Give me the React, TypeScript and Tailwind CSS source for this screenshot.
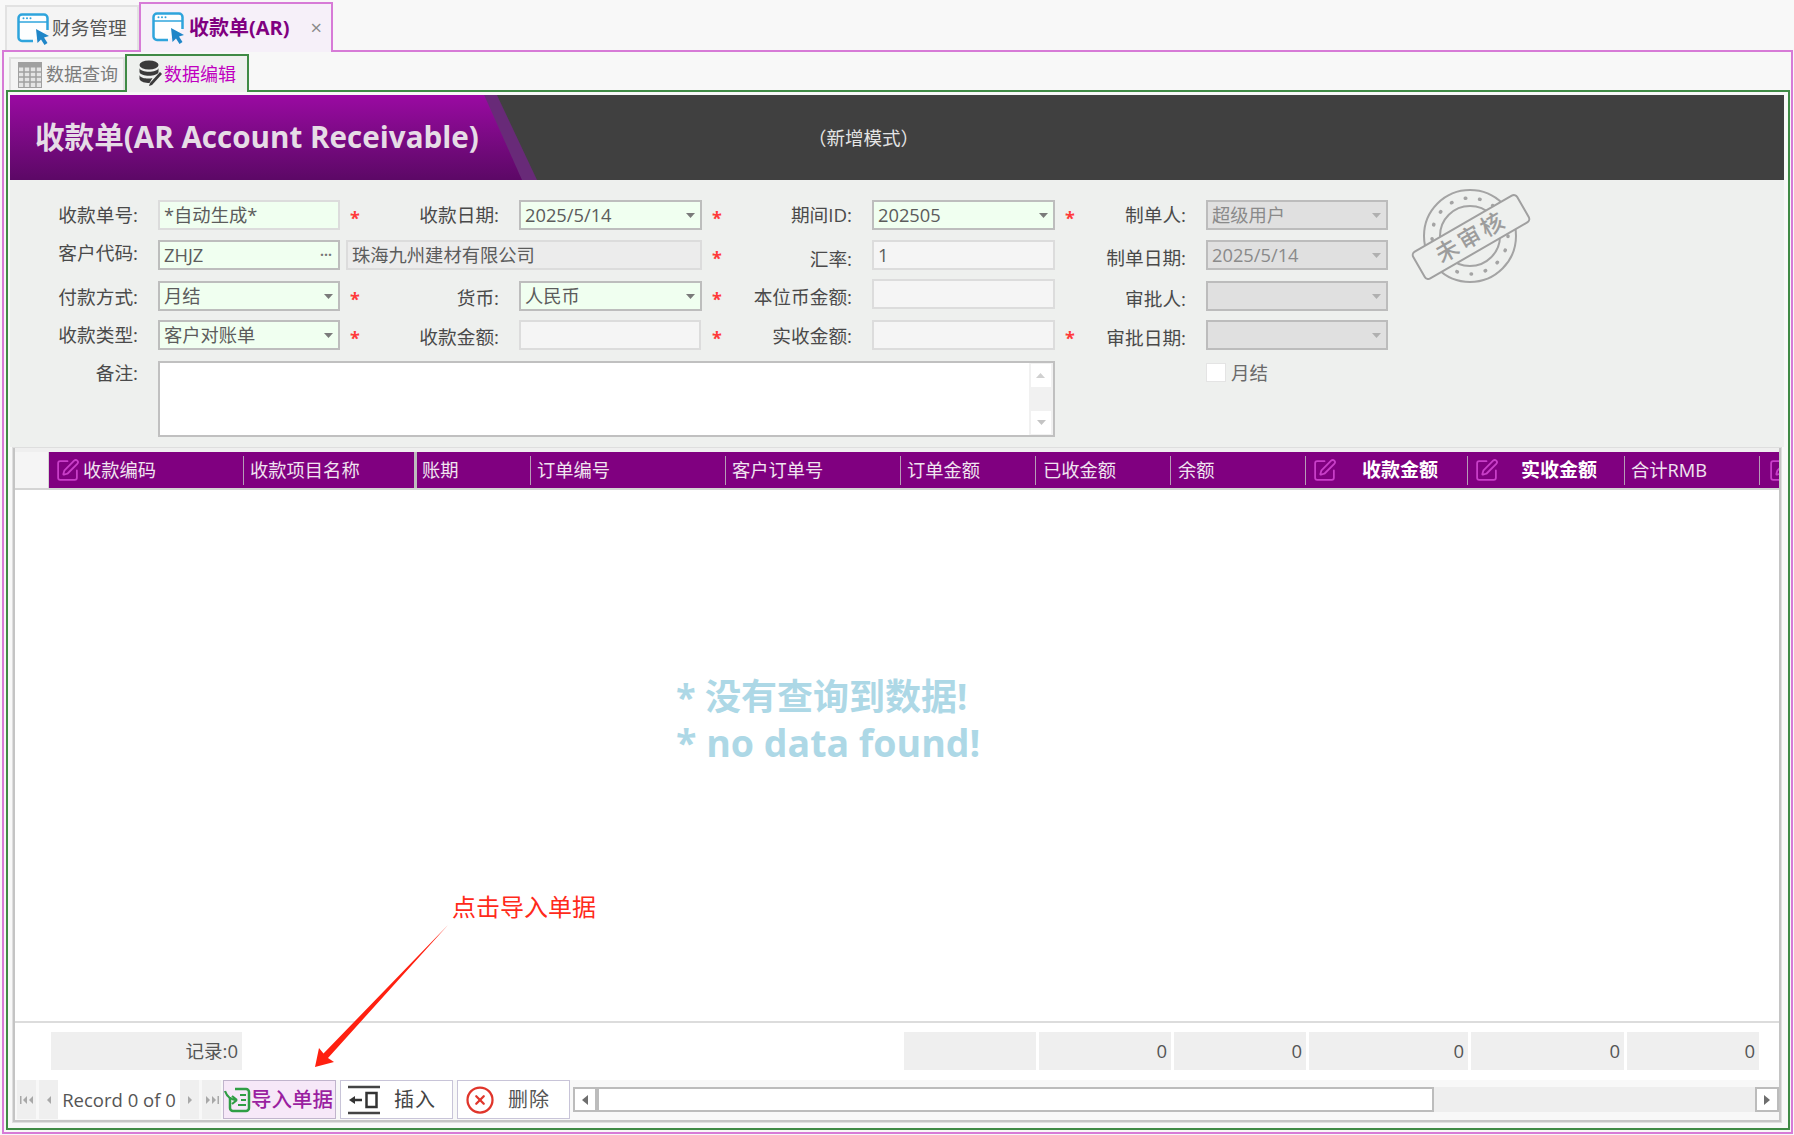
import React from 'react';
import { SquarePen, CircleX } from 'lucide-react';

const fieldText = "pt-[1px] text-[18.300px] leading-none text-[#5c5c5c]";

// blue window with a cursor, used on both top tabs
const WindowIcon = () => (
  <svg width="34" height="34" viewBox="0 0 34 34" className="shrink-0">
    <path d="M17 29H6a3.500 3.500 0 0 1-3.500-3.500V6A3.500 3.500 0 0 1 6 2.500h22A3.500 3.500 0 0 1 31.500 6v12" fill="#fdfeff" stroke="#2ea4dc" strokeWidth="2.500" />
    <path d="M3 10h28" stroke="#2ea4dc" strokeWidth="1.500" />
    <circle cx="7.500" cy="6.300" r="1" fill="#2ea4dc" />
    <circle cx="11" cy="6.300" r="1" fill="#2ea4dc" />
    <circle cx="14.500" cy="6.300" r="1" fill="#2ea4dc" />
    <path d="M20 17l13 7-5 1.500 3.500 5.500-3 2-3.500-5.500-3.500 3.500z" fill="#1f86c8" />
  </svg>
);

const GridIcon = () => (
  <svg width="24" height="26" viewBox="0 0 24 26" className="shrink-0">
    <rect x="0.500" y="0.500" width="23" height="25" fill="#e4e4e4" stroke="#a0a0a0" />
    <rect x="0.500" y="0.500" width="23" height="5" fill="#a0a0a0" />
    <path d="M6 5v20M12 5v20M18 5v20M1 10h22M1 15h22M1 20h22" stroke="#a0a0a0" strokeWidth="1.500" />
  </svg>
);

const DbEditIcon = () => (
  <svg width="24" height="28" viewBox="0 0 24 28" className="shrink-0">
    <ellipse cx="11" cy="5" rx="9.500" ry="4.500" fill="#3b3b3b" />
    <path d="M1.500 8c1 5 18 5 19 0v4c-1 5-18 5-19 0z" fill="#3b3b3b" />
    <path d="M1.500 15c1 4 10 4 13 3l-3 5c-4 0-9-1-10-4z" fill="#3b3b3b" />
    <path d="M22 12l2 2-10 11-3 1 1-3z" fill="#3b3b3b" />
  </svg>
);

const Caret = ({ color = '#7a7a7a' }: { color?: string }) => (
  <svg width="9" height="5" viewBox="0 0 9 5" className="shrink-0">
    <path d="M0 0h9L4.500 5z" fill={color} />
  </svg>
);

const Star = () => <div className="pl-[10px] pt-[6px] text-[18px] font-bold leading-[24px] text-[#ff3a3a]">*</div>;

const Label = ({ text, w, className = '' }: { text: string; w: string; className?: string }) => (
  <div className={`${w} pr-[20px] text-right text-[18.700px] leading-[30px] text-[#4a4a4a] whitespace-nowrap ${className}`}>{text}</div>
);

const Field = ({ value, w, kind, caret, className = '' }: { value?: string; w: string; kind: 'req' | 'reqSoft' | 'read' | 'off'; caret?: boolean; className?: string }) => {
  const look = {
    req: 'bg-[#f0fff0] border-[#bdbdbd]',
    reqSoft: 'bg-[#f0fff0] border-[#dcdcdc]',
    read: 'bg-[#f5f5f5] border-[#dcdcdc]',
    off: 'bg-[#e0e0e0] border-[#bcbcbc]',
  }[kind];
  return (
    <div className={`${w} h-[30px] border-2 ${look} flex items-center justify-between pl-[4px] pr-[5px] ${className}`}>
      <span className={kind === 'off' ? 'pt-[1px] text-[18.300px] leading-none text-[#8a8a8a]' : fieldText}>{value}</span>
      {caret && <Caret color={kind === 'off' ? '#b0b0b0' : '#7a7a7a'} />}
    </div>
  );
};

const Stamp = () => (
  <svg width="122" height="96" viewBox="0 0 122 96" className="ml-[22px] mt-[-11px] shrink-0">
    <g fill="none" stroke="#a4a4a4">
      <circle cx="60" cy="47" r="46" strokeWidth="2" />
      <circle cx="60" cy="47" r="30" strokeWidth="2" />
      <circle cx="60" cy="47" r="38" strokeWidth="3.500" strokeDasharray="0.500 14" strokeLinecap="round" />
    </g>
    <g transform="rotate(-30 61 48)">
      <rect x="1" y="32.500" width="120" height="31" rx="4" fill="#eef0ee" stroke="#a0a0a0" strokeWidth="2" />
      <text x="61" y="56" textAnchor="middle" fontSize="23" fontWeight="500" fill="#9c9c9c" letterSpacing="3">未审核</text>
    </g>
  </svg>
);

const HeadCell = ({ w, text, pl, icon, bold, thick }: { w: string; text: string; pl: string; icon?: boolean; bold?: boolean; thick?: boolean }) => (
  <div className={`${w} ${thick ? 'self-stretch border-r-[3px] border-[#bdbdbd]' : 'h-[29px] border-r border-[#b79bb7]'} shrink-0 flex items-center overflow-hidden leading-none ${bold ? 'text-[19px] font-bold text-white' : 'text-[18.300px] text-[#f0e4f0]'}`}>
    {icon && <SquarePen size={25} strokeWidth={1.700} className="ml-[6px] shrink-0 text-[#c83fc8]" />}
    <span className={`${pl} whitespace-nowrap`}>{text}</span>
  </div>
);

const SumCell = ({ w, text }: { w: string; text?: string }) => (
  <div className={`${w} h-[38px] bg-[#efefef] flex items-center justify-end pr-[4px] text-[18.500px] text-[#555]`}>{text}</div>
);

const NavBtn = ({ d, w = 'w-[19px]', className = '' }: { d: string; w?: string; className?: string }) => (
  <div className={`${w} h-[39px] bg-[#efefef] flex items-center justify-center ${className}`}>
    <svg width="14" height="10" viewBox="0 0 14 10">
      <path d={d} fill="#a8a8a8" />
    </svg>
  </div>
);

const ScrollBtn = ({ d, className = '' }: { d: string; className?: string }) => (
  <div className={`w-[24px] h-[25px] bg-white border-2 border-[#bcbcbc] flex items-center justify-center shrink-0 ${className}`}>
    <svg width="8" height="12" viewBox="0 0 8 12">
      <path d={d} fill="#6e6e6e" />
    </svg>
  </div>
);

export default function App() {
  return (
    <div className="relative w-[1794px] h-[1135px] overflow-hidden bg-[#f8f8f8] font-['Open_Sans','Noto_Sans_CJK_SC',sans-serif]">
      {/* top tabs */}
      <div className="h-[50px] flex items-end pl-[5px]">
        <div className="w-[134px] h-[45px] border-2 border-b-0 border-[#e2e2e2] bg-[#f4f4f4] flex items-center pl-[9px] gap-[2px]">
          <WindowIcon />
          <span className="text-[18.700px] text-[#555] whitespace-nowrap">财务管理</span>
        </div>
        <div className="relative z-10 w-[194px] h-[50px] mb-[-2px] border-2 border-b-0 border-[#d77bd7] bg-[#f6f0f9] flex items-center pl-[10px]">
          <WindowIcon />
          <span className="ml-[4px] text-[20px] font-bold text-[#800080] whitespace-nowrap">收款单(AR)</span>
          <span className="ml-[21px] text-[20px] leading-none text-[#8a8a8a]">×</span>
        </div>
      </div>

      <div className="ml-[2px] w-[1791px] h-[1084px] border-2 border-[#d77bd7] bg-[#f8f8f8]">
        {/* inner tabs */}
        <div className="h-[38px] flex items-end pl-[5px]">
          <div className="w-[116px] h-[33px] border-2 border-b-0 border-[#e0e0e0] bg-[#f4f4f4] flex items-center pl-[7px] gap-[4px]">
            <GridIcon />
            <span className="text-[18px] text-[#7c7c7c] whitespace-nowrap">数据查询</span>
          </div>
          <div className="relative z-10 w-[124px] h-[38px] mb-[-2px] border-2 border-b-0 border-[#3f8a45] bg-[#eef0ee] flex items-center pl-[11px] gap-[2px]">
            <DbEditIcon />
            <span className="text-[18px] text-[#c000c0] whitespace-nowrap">数据编辑</span>
          </div>
        </div>

        <div className="ml-[2px] w-[1784px] h-[1040px] border-2 border-[#3f8a45] bg-[#f8f8f8] pt-[3px] pl-[2px]">
          {/* banner */}
          <div className="relative w-[1774px] h-[85px] bg-[#404040] overflow-hidden flex items-center">
            <div className="absolute inset-y-0 left-0 w-[527px] bg-[#682a78] [clip-path:polygon(0_0,92.400%_0,100%_100%,0_100%)]" />
            <div className="absolute inset-y-0 left-0 w-[512px] bg-gradient-to-b from-[#9a0aa2] to-[#5c0866] [clip-path:polygon(0_0,92.600%_0,100%_100%,0_100%)]" />
            <span className="relative ml-[25px] text-[29.600px] font-bold text-[#e6dce6] whitespace-nowrap">收款单(AR Account Receivable)</span>
            <span className="absolute left-[798px] text-[18.500px] text-[#e4e4e4] whitespace-nowrap">（新增模式）</span>
          </div>

          {/* form */}
          <div className="w-[1774px] h-[267px] bg-[#eef0ee] pt-[20px] flex">
            <div>
              <div className="flex h-[30px]">
                <Label text="收款单号:" w="w-[148px]" />
                <Field value="*自动生成*" w="w-[182px]" kind="reqSoft" />
                <div className="w-[30px]"><Star /></div>
                <Label text="收款日期:" w="w-[149px]" />
                <Field value="2025/5/14" w="w-[183px]" kind="req" caret />
                <div className="w-[30px]"><Star /></div>
                <Label text="期间ID:" w="w-[140px]" />
                <Field value="202505" w="w-[183px]" kind="req" caret />
                <div className="w-[30px]"><Star /></div>
                <Label text="制单人:" w="w-[121px]" />
                <Field value="超级用户" w="w-[182px]" kind="off" caret />
              </div>
              <div className="flex h-[30px] mt-[10px]">
                <Label text="客户代码:" w="w-[148px]" className="mt-[-2px]" />
                <div className="w-[182px] h-[30px] border-2 border-[#bdbdbd] bg-[#f0fff0] flex items-center justify-between pl-[4px] pr-[6px]">
                  <span className={fieldText}>ZHJZ</span>
                  <span className="text-[14px] font-bold leading-none text-[#777] pb-[8px]">...</span>
                </div>
                <div className="ml-[6px] w-[356px] h-[30px] border-2 border-[#dcdcdc] bg-[#ececec] flex items-center pl-[4px]">
                  <span className={fieldText}>珠海九州建材有限公司</span>
                </div>
                <div className="w-[30px]"><Star /></div>
                <Label text="汇率:" w="w-[140px]" className="mt-[4px]" />
                <Field value="1" w="w-[183px]" kind="read" />
                <div className="w-[30px]" />
                <Label text="制单日期:" w="w-[121px]" className="mt-[3px]" />
                <Field value="2025/5/14" w="w-[182px]" kind="off" caret />
              </div>
              <div className="flex h-[30px] mt-[11px]">
                <Label text="付款方式:" w="w-[148px]" className="mt-[1px]" />
                <Field value="月结" w="w-[182px]" kind="req" caret />
                <div className="w-[30px]"><Star /></div>
                <Label text="货币:" w="w-[149px]" className="mt-[2px]" />
                <Field value="人民币" w="w-[183px]" kind="req" caret />
                <div className="w-[30px]"><Star /></div>
                <Label text="本位币金额:" w="w-[140px]" className="mt-[1px]" />
                <Field w="w-[183px]" kind="read" className="mt-[-2px]" />
                <div className="w-[30px]" />
                <Label text="审批人:" w="w-[121px]" className="mt-[3px]" />
                <Field w="w-[182px]" kind="off" caret />
              </div>
              <div className="flex h-[30px] mt-[9px]">
                <Label text="收款类型:" w="w-[148px]" />
                <Field value="客户对账单" w="w-[182px]" kind="req" caret />
                <div className="w-[30px]"><Star /></div>
                <Label text="收款金额:" w="w-[149px]" className="mt-[2px]" />
                <Field w="w-[182px]" kind="read" className="mr-[1px]" />
                <div className="w-[30px]"><Star /></div>
                <Label text="实收金额:" w="w-[140px]" className="mt-[1px]" />
                <Field w="w-[183px]" kind="read" />
                <div className="w-[30px]"><Star /></div>
                <Label text="审批日期:" w="w-[121px]" className="mt-[3px]" />
                <Field w="w-[182px]" kind="off" caret />
              </div>
              <div className="flex mt-[11px]">
                <Label text="备注:" w="w-[148px]" className="mt-[-3px]" />
                <div className="w-[897px] h-[76px] border-2 border-[#c0c0c0] bg-white flex justify-end">
                  <div className="w-[24px] px-[2px] py-[1px] bg-[#f1f1f1] flex flex-col justify-between">
                    <div className="h-[23px] bg-white flex items-center justify-center rotate-180"><Caret color="#d0d0d0" /></div>
                    <div className="h-[23px] bg-white flex items-center justify-center"><Caret color="#c4c4c4" /></div>
                  </div>
                </div>
                <div className="ml-[151px] mt-[2px] w-[20px] h-[19px] bg-white border border-[#e4e4e4]" />
                <span className="ml-[5px] text-[18.500px] leading-[24px] text-[#6a6a6a]">月结</span>
              </div>
            </div>
            <Stamp />
          </div>

          {/* grid */}
          <div className="ml-[2px] w-[1770px] h-[676px] border border-[#dedede] bg-white">
            <div className="h-full border-x-2 border-b-2 border-[#c4c4c4] flex flex-col">
              <div className="h-[4px] bg-[#efefef] shrink-0" />
              <div className="h-[38px] shrink-0 flex items-center border-b-2 border-[#d4d4d4]">
                <div className="w-[34px] self-stretch bg-[#f5f5f5] border-r border-[#d4d4d4] shrink-0" />
                <div className="flex-1 h-full bg-[#800080] flex items-center overflow-hidden">
                  <HeadCell w="w-[195px]" text="收款编码" pl="pl-[3px]" icon />
                  <HeadCell w="w-[173px]" text="收款项目名称" pl="pl-[6px]" thick />
                  <HeadCell w="w-[114px]" text="账期" pl="pl-[5px]" />
                  <HeadCell w="w-[195px]" text="订单编号" pl="pl-[6px]" />
                  <HeadCell w="w-[175px]" text="客户订单号" pl="pl-[6px]" />
                  <HeadCell w="w-[135px]" text="订单金额" pl="pl-[6px]" />
                  <HeadCell w="w-[135px]" text="已收金额" pl="pl-[7px]" />
                  <HeadCell w="w-[135px]" text="余额" pl="pl-[7px]" />
                  <HeadCell w="w-[162px]" text="收款金额" pl="pl-[25px]" icon bold />
                  <HeadCell w="w-[157px]" text="实收金额" pl="pl-[22px]" icon bold />
                  <HeadCell w="w-[135px]" text="合计RMB" pl="pl-[6px]" />
                  <SquarePen size={25} strokeWidth={1.700} className="ml-[8px] shrink-0 text-[#c83fc8]" />
                </div>
              </div>

              <div className="h-[531px] shrink-0 pl-[661px] pt-[183px] text-[36px] font-bold leading-[47px] text-[#add8e6] whitespace-nowrap">
                <div>* 没有查询到数据!</div>
                <div className="text-[37.500px] leading-[45px]">* no data found!</div>
              </div>

              <div className="h-[59px] shrink-0 border-t-2 border-[#dcdcdc] pt-[9px] flex gap-[3px] pl-[36px]">
                <SumCell w="w-[191px]" text="记录:0" />
                <div className="w-[656px]" />
                <SumCell w="w-[132px]" />
                <SumCell w="w-[132px]" text="0" />
                <SumCell w="w-[132px]" text="0" />
                <SumCell w="w-[159px]" text="0" />
                <SumCell w="w-[153px]" text="0" />
                <SumCell w="w-[132px]" text="0" />
              </div>

              <div className="flex-1 bg-[#f8f8f8] pl-[2px] flex items-start">
                <NavBtn d="M0 1h1.500v8H0zM7 1v8L3 5zM13 1v8L9 5z" />
                <NavBtn d="M9 1v8L5 5z" className="ml-[3px]" />
                <span className="w-[122px] h-[39px] bg-white flex items-center justify-center text-[18.500px] text-[#555] whitespace-nowrap">Record 0 of 0</span>
                <NavBtn d="M5 1v8l4-4z" />
                <NavBtn d="M1 1v8l4-4zM7 1v8l4-4zM12.500 1H14v8h-1.500z" className="ml-[3px]" />
                <div className="ml-[2px] w-[113px] h-[39px] bg-[#f6e8f8] border border-[#c0b4cc] flex items-center text-[20.500px] font-medium text-[#9a1fa0] whitespace-nowrap">
                  <svg width="27" height="26" viewBox="0 0 27 26" className="shrink-0">
                    <path d="M6 10v11a3 3 0 0 0 3 3h13a3 3 0 0 0 3-3V5a3 3 0 0 0-3-3H11" fill="none" stroke="#2f9e44" strokeWidth="2.500" />
                    <path d="M1 4c2 6 7 9 12 9M13 13l-5-4M13 13l-5 4" fill="none" stroke="#2f9e44" strokeWidth="2.200" />
                    <path d="M16 8h6M17 13h5M14 18h8" stroke="#2f9e44" strokeWidth="1.800" />
                  </svg>
                  导入单据
                </div>
                <div className="ml-[4px] w-[113px] h-[39px] bg-white border border-[#c8c4d8] flex items-center pl-[6px] text-[20px] text-[#444] whitespace-nowrap">
                  <svg width="34" height="34" viewBox="0 0 34 34" className="shrink-0">
                    <path d="M1 4h32M1 30h32" stroke="#444" strokeWidth="2.500" />
                    <rect x="19.500" y="10" width="10" height="14" fill="none" stroke="#333" strokeWidth="2.500" />
                    <path d="M5 17h10" stroke="#333" strokeWidth="2.500" />
                    <path d="M2 17l6-4v8z" fill="#333" />
                  </svg>
                  <span className="ml-[13px] tracking-[1px]">插入</span>
                </div>
                <div className="ml-[4px] w-[113px] h-[39px] bg-white border border-[#c8c4d8] flex items-center pl-[7px] text-[20px] text-[#555] whitespace-nowrap">
                  <CircleX size={30} strokeWidth={1.800} className="shrink-0 text-[#e0352b]" />
                  <span className="ml-[13px] tracking-[1px]">删除</span>
                </div>
                <div className="ml-[3px] mt-[7px] w-[1206px] h-[25px] bg-[#eeeeee] flex">
                  <ScrollBtn d="M7 1v10L1 6z" />
                  <div className="w-[837px] h-[25px] bg-white border-2 border-[#bcbcbc]" />
                  <div className="flex-1" />
                  <ScrollBtn d="M1 1v10l6-5z" />
                </div>
              </div>
            </div>
          </div>
        </div>
      </div>

      {/* annotation over the grid */}
      <span className="absolute left-[452px] top-[892px] text-[24px] leading-[30px] text-[#ff2a1a] whitespace-nowrap">点击导入单据</span>
      <svg width="1794" height="1135" className="absolute inset-0 pointer-events-none">
        <polygon points="315,1067 319,1048 323.500,1053.500 448,925 328,1058 334,1062" fill="#ff2010" />
      </svg>
    </div>
  );
}
